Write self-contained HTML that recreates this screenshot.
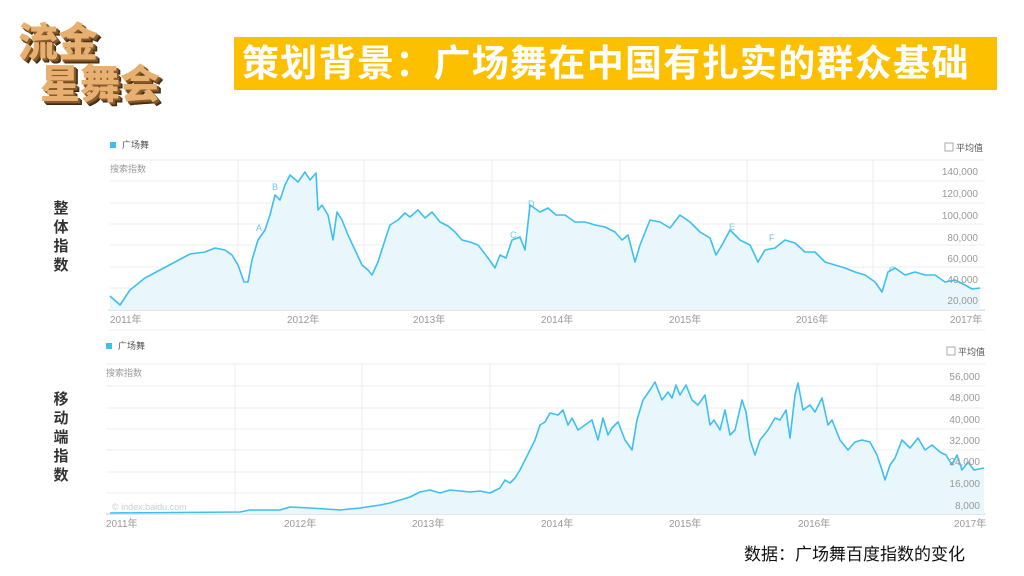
<!DOCTYPE html><html><head><meta charset="utf-8"><style>
body{margin:0;width:1024px;height:576px;background:#fff;overflow:hidden;position:relative;font-family:"Liberation Sans","Noto Sans CJK SC",sans-serif}
.ban{position:absolute;left:234px;top:37px;width:763px;height:53px;background:#fdc000;color:#fff;font-weight:bold;font-size:37px;line-height:53px;padding-left:8px;box-sizing:border-box;letter-spacing:1.3px;white-space:nowrap;overflow:hidden}
.vl{position:absolute;left:52px;width:18px;font-size:15px;font-weight:bold;color:#333;line-height:19px;text-align:center}
.cap{position:absolute;left:744px;top:540px;font-size:17px;color:#111}
.logo{position:absolute;left:18px;top:22px;font-size:40px;font-weight:900;color:#e8b070;text-shadow:2px 2px 0 #8a5a2a,3px 3px 0 #5a3a1a,4px 4px 0 #3a2a10;line-height:42px}
</style></head><body>
<div class="logo"><div>流金</div><div style="margin-left:22px">星舞会</div></div>
<div class="ban">策划背景：广场舞在中国有扎实的群众基础</div>
<div class="vl" style="top:199px">整<br>体<br>指<br>数</div>
<div class="vl" style="top:390px">移<br>动<br>端<br>指<br>数</div>
<svg width="1024" height="576" style="position:absolute;left:0;top:0" font-family="Liberation Sans,Noto Sans CJK SC,sans-serif">
<g fill="#999" font-size="10">
<rect x="110" y="142" width="6" height="6" fill="#3cc0f0"/><text x="122" y="148" fill="#555" font-size="9">广场舞</text>
<rect x="945" y="143" width="8" height="8" fill="none" stroke="#aaa"/><text x="956" y="151" fill="#555" font-size="9">平均值</text>
<text x="110" y="172" font-size="9">搜索指数</text>
<g stroke="#eee"><line x1="110" y1="160" x2="985" y2="160"/><line x1="110" y1="181" x2="985" y2="181"/><line x1="110" y1="203" x2="985" y2="203"/><line x1="110" y1="224" x2="985" y2="224"/><line x1="110" y1="245" x2="985" y2="245"/><line x1="110" y1="267" x2="985" y2="267"/><line x1="110" y1="288" x2="985" y2="288"/>
<line x1="238" y1="160" x2="238" y2="310"/><line x1="364" y1="160" x2="364" y2="310"/><line x1="492" y1="160" x2="492" y2="310"/><line x1="620" y1="160" x2="620" y2="310"/><line x1="747" y1="160" x2="747" y2="310"/><line x1="873" y1="160" x2="873" y2="310"/></g>
<line x1="108" y1="310" x2="985" y2="310" stroke="#ccc"/>
<text x="110" y="323">2011年</text><text x="287" y="323">2012年</text><text x="413" y="323">2013年</text><text x="541" y="323">2014年</text><text x="669" y="323">2015年</text><text x="796" y="323">2016年</text><text x="950" y="323">2017年</text>
<line x1="108" y1="330" x2="985" y2="330" stroke="#eee"/>
<text x="112" y="307" fill="#ccc" font-size="9">© index.baidu.com</text>
<g fill="#6cc8ee" font-size="9"><text x="256" y="231">A</text><text x="272" y="190">B</text><text x="510" y="238">C</text><text x="528" y="207">D</text><text x="729" y="230">E</text><text x="769" y="241">F</text><text x="889" y="273">G</text></g>
</g>
<path fill="#e9f6fc" stroke="none" d="M110,310 L110,296 120,305 130,290 145,278 160,270 175,262 190,254 205,252 215,248 225,250 232,255 238,265 244,282 248,282 252,260 258,240 265,230 270,215 275,195 280,200 285,185 290,175 298,182 305,172 310,180 316,173 318,210 322,205 328,215 333,240 337,212 342,220 348,235 355,250 362,265 368,270 372,275 378,262 385,240 390,225 398,220 405,213 410,217 418,210 425,218 432,212 440,222 448,226 455,232 462,240 470,242 478,245 488,258 495,268 500,255 506,258 512,240 520,237 525,250 530,205 540,212 548,208 556,215 565,215 575,222 585,222 595,225 605,227 615,232 622,240 628,235 635,262 640,245 650,220 660,222 670,228 680,215 690,222 700,232 710,238 716,255 722,245 730,230 740,240 750,245 758,262 765,250 775,248 785,240 795,243 805,252 815,252 825,262 835,265 845,268 855,272 865,275 875,282 882,292 888,272 895,268 905,275 915,272 925,275 935,275 945,282 955,280 965,285 972,289 980,288 L980,310Z"/>
<polyline fill="none" stroke="#3cc0f0" stroke-width="1.6" stroke-linejoin="round" points="110,296 120,305 130,290 145,278 160,270 175,262 190,254 205,252 215,248 225,250 232,255 238,265 244,282 248,282 252,260 258,240 265,230 270,215 275,195 280,200 285,185 290,175 298,182 305,172 310,180 316,173 318,210 322,205 328,215 333,240 337,212 342,220 348,235 355,250 362,265 368,270 372,275 378,262 385,240 390,225 398,220 405,213 410,217 418,210 425,218 432,212 440,222 448,226 455,232 462,240 470,242 478,245 488,258 495,268 500,255 506,258 512,240 520,237 525,250 530,205 540,212 548,208 556,215 565,215 575,222 585,222 595,225 605,227 615,232 622,240 628,235 635,262 640,245 650,220 660,222 670,228 680,215 690,222 700,232 710,238 716,255 722,245 730,230 740,240 750,245 758,262 765,250 775,248 785,240 795,243 805,252 815,252 825,262 835,265 845,268 855,272 865,275 875,282 882,292 888,272 895,268 905,275 915,272 925,275 935,275 945,282 955,280 965,285 972,289 980,288"/>
<g fill="#999" font-size="10">
<text x="978" y="175" text-anchor="end">140,000</text><text x="978" y="197" text-anchor="end">120,000</text><text x="978" y="219" text-anchor="end">100,000</text><text x="978" y="241" text-anchor="end">80,000</text><text x="978" y="262" text-anchor="end">60,000</text><text x="978" y="283" text-anchor="end">40,000</text><text x="978" y="304" text-anchor="end">20,000</text>
<rect x="106" y="343" width="6" height="6" fill="#3cc0f0"/><text x="118" y="349" fill="#555" font-size="9">广场舞</text>
<rect x="947" y="347" width="8" height="8" fill="none" stroke="#aaa"/><text x="958" y="355" fill="#555" font-size="9">平均值</text>
<text x="106" y="376" font-size="9">搜索指数</text>
<g stroke="#eee"><line x1="106" y1="364" x2="985" y2="364"/><line x1="106" y1="386" x2="985" y2="386"/><line x1="106" y1="408" x2="985" y2="408"/><line x1="106" y1="429" x2="985" y2="429"/><line x1="106" y1="450" x2="985" y2="450"/><line x1="106" y1="472" x2="985" y2="472"/><line x1="106" y1="493" x2="985" y2="493"/>
<line x1="235" y1="364" x2="235" y2="514"/><line x1="362" y1="364" x2="362" y2="514"/><line x1="490" y1="364" x2="490" y2="514"/><line x1="619" y1="364" x2="619" y2="514"/><line x1="748" y1="364" x2="748" y2="514"/><line x1="877" y1="364" x2="877" y2="514"/></g>
<line x1="106" y1="514" x2="985" y2="514" stroke="#ccc"/>
<text x="106" y="527">2011年</text><text x="284" y="527">2012年</text><text x="412" y="527">2013年</text><text x="541" y="527">2014年</text><text x="669" y="527">2015年</text><text x="798" y="527">2016年</text><text x="954" y="527">2017年</text>
<text x="112" y="510" fill="#ccc" font-size="9">© index.baidu.com</text>
</g>
<path fill="#e9f6fc" d="M110,514 L110,513 240,512 250,510 280,510 290,507 310,508 340,510 360,508 380,505 390,503 400,500 410,497 420,492 430,490 440,493 450,490 460,491 470,492 480,491 490,493 500,488 505,480 510,483 515,478 520,470 525,460 530,450 535,440 540,425 545,422 550,413 558,415 563,410 568,425 572,418 578,430 585,425 592,420 598,440 603,418 608,435 612,428 618,422 625,440 632,450 637,420 643,400 650,390 655,382 662,400 668,392 672,398 676,385 680,395 686,385 692,400 698,405 705,395 710,425 714,420 720,430 725,410 730,435 735,430 742,400 746,412 750,440 755,455 760,440 768,430 775,418 780,420 786,410 790,438 795,395 798,383 803,410 810,405 815,412 822,398 828,425 832,420 840,440 848,450 855,442 862,440 870,442 877,455 882,470 885,480 890,465 895,458 902,440 910,448 918,438 925,450 932,445 940,452 946,455 952,465 957,455 962,470 968,462 974,470 984,468 L984,514Z"/>
<polyline fill="none" stroke="#3cc0f0" stroke-width="1.6" stroke-linejoin="round" points="110,513 240,512 250,510 280,510 290,507 310,508 340,510 360,508 380,505 390,503 400,500 410,497 420,492 430,490 440,493 450,490 460,491 470,492 480,491 490,493 500,488 505,480 510,483 515,478 520,470 525,460 530,450 535,440 540,425 545,422 550,413 558,415 563,410 568,425 572,418 578,430 585,425 592,420 598,440 603,418 608,435 612,428 618,422 625,440 632,450 637,420 643,400 650,390 655,382 662,400 668,392 672,398 676,385 680,395 686,385 692,400 698,405 705,395 710,425 714,420 720,430 725,410 730,435 735,430 742,400 746,412 750,440 755,455 760,440 768,430 775,418 780,420 786,410 790,438 795,395 798,383 803,410 810,405 815,412 822,398 828,425 832,420 840,440 848,450 855,442 862,440 870,442 877,455 882,470 885,480 890,465 895,458 902,440 910,448 918,438 925,450 932,445 940,452 946,455 952,465 957,455 962,470 968,462 974,470 984,468"/>
<g fill="#999" font-size="10">
<text x="980" y="380" text-anchor="end">56,000</text><text x="980" y="401" text-anchor="end">48,000</text><text x="980" y="423" text-anchor="end">40,000</text><text x="980" y="444" text-anchor="end">32,000</text><text x="980" y="465" text-anchor="end">24,000</text><text x="980" y="487" text-anchor="end">16,000</text><text x="980" y="509" text-anchor="end">8,000</text>
</g>
</svg>
<div class="cap">数据：广场舞百度指数的变化</div>
</body></html>
